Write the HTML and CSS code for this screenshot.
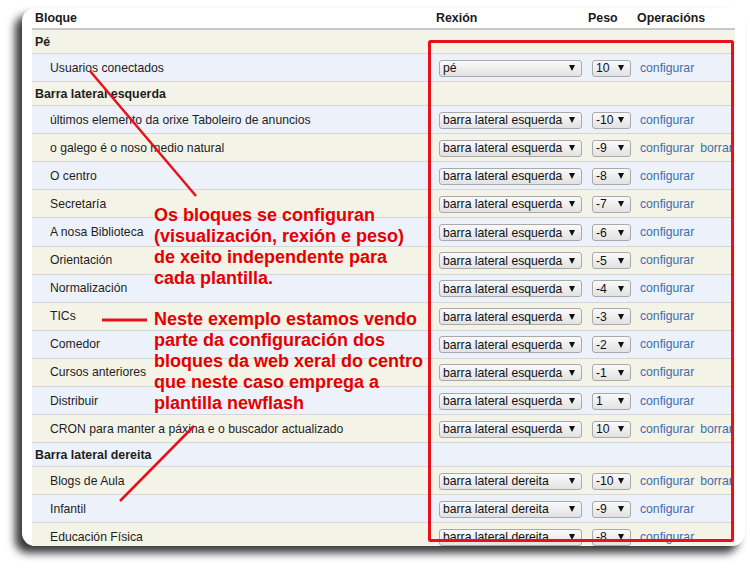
FILE: index.html
```html
<!DOCTYPE html>
<html lang="gl">
<head>
<meta charset="utf-8">
<title>Bloques</title>
<link rel="stylesheet" href="styles.css">
</head>
<body>
<div class="card">
  <div class="tbl">
    <div class="row head">
      <div class="c1">Bloque</div>
      <div class="c2">Rexión</div>
      <div class="c3">Peso</div>
      <div class="c4">Operacións</div>
    </div>
    <div class="rows">
      <div class="row region"><div class="c1">Pé</div></div>
      <div class="row"><div class="c1 name">Usuarios conectados</div><div class="c2"><span class="sel rg">pé</span></div><div class="c3"><span class="sel wt">10</span></div><div class="c4"><a>configurar</a></div></div>
      <div class="row region"><div class="c1">Barra lateral esquerda</div></div>
      <div class="row"><div class="c1 name">últimos elemento da orixe Taboleiro de anuncios</div><div class="c2"><span class="sel rg">barra lateral esquerda</span></div><div class="c3"><span class="sel wt">-10</span></div><div class="c4"><a>configurar</a></div></div>
      <div class="row"><div class="c1 name">o galego é o noso medio natural</div><div class="c2"><span class="sel rg">barra lateral esquerda</span></div><div class="c3"><span class="sel wt">-9</span></div><div class="c4"><a>configurar</a><a class="del">borrar</a></div></div>
      <div class="row"><div class="c1 name">O centro</div><div class="c2"><span class="sel rg">barra lateral esquerda</span></div><div class="c3"><span class="sel wt">-8</span></div><div class="c4"><a>configurar</a></div></div>
      <div class="row"><div class="c1 name">Secretaría</div><div class="c2"><span class="sel rg">barra lateral esquerda</span></div><div class="c3"><span class="sel wt">-7</span></div><div class="c4"><a>configurar</a></div></div>
      <div class="row"><div class="c1 name">A nosa Biblioteca</div><div class="c2"><span class="sel rg">barra lateral esquerda</span></div><div class="c3"><span class="sel wt">-6</span></div><div class="c4"><a>configurar</a></div></div>
      <div class="row"><div class="c1 name">Orientación</div><div class="c2"><span class="sel rg">barra lateral esquerda</span></div><div class="c3"><span class="sel wt">-5</span></div><div class="c4"><a>configurar</a></div></div>
      <div class="row"><div class="c1 name">Normalización</div><div class="c2"><span class="sel rg">barra lateral esquerda</span></div><div class="c3"><span class="sel wt">-4</span></div><div class="c4"><a>configurar</a></div></div>
      <div class="row"><div class="c1 name">TICs</div><div class="c2"><span class="sel rg">barra lateral esquerda</span></div><div class="c3"><span class="sel wt">-3</span></div><div class="c4"><a>configurar</a></div></div>
      <div class="row"><div class="c1 name">Comedor</div><div class="c2"><span class="sel rg">barra lateral esquerda</span></div><div class="c3"><span class="sel wt">-2</span></div><div class="c4"><a>configurar</a></div></div>
      <div class="row"><div class="c1 name">Cursos anteriores</div><div class="c2"><span class="sel rg">barra lateral esquerda</span></div><div class="c3"><span class="sel wt">-1</span></div><div class="c4"><a>configurar</a></div></div>
      <div class="row"><div class="c1 name">Distribuir</div><div class="c2"><span class="sel rg">barra lateral esquerda</span></div><div class="c3"><span class="sel wt">1</span></div><div class="c4"><a>configurar</a></div></div>
      <div class="row"><div class="c1 name">CRON para manter a páxina e o buscador actualizado</div><div class="c2"><span class="sel rg">barra lateral esquerda</span></div><div class="c3"><span class="sel wt">10</span></div><div class="c4"><a>configurar</a><a class="del">borrar</a></div></div>
      <div class="row region"><div class="c1">Barra lateral dereita</div></div>
      <div class="row"><div class="c1 name">Blogs de Aula</div><div class="c2"><span class="sel rg">barra lateral dereita</span></div><div class="c3"><span class="sel wt">-10</span></div><div class="c4"><a>configurar</a><a class="del">borrar</a></div></div>
      <div class="row"><div class="c1 name">Infantil</div><div class="c2"><span class="sel rg">barra lateral dereita</span></div><div class="c3"><span class="sel wt">-9</span></div><div class="c4"><a>configurar</a></div></div>
      <div class="row"><div class="c1 name">Educación Física</div><div class="c2"><span class="sel rg">barra lateral dereita</span></div><div class="c3"><span class="sel wt">-8</span></div><div class="c4"><a>configurar</a></div></div>
    </div>
  </div>
</div>

<svg class="marks" width="750" height="569" viewBox="0 0 750 569" xmlns="http://www.w3.org/2000/svg">
  <rect x="429.5" y="41.5" width="303" height="499" rx="1" fill="none" stroke="#e8111b" stroke-width="3"/>
  <line x1="90" y1="71" x2="196" y2="196" stroke="#e8111b" stroke-width="2.5"/>
  <line x1="102" y1="320" x2="147" y2="320" stroke="#e8111b" stroke-width="3"/>
  <line x1="194" y1="426" x2="120" y2="501" stroke="#e8111b" stroke-width="2.5"/>
</svg>

<div class="note note1">Os bloques se configuran<br>(visualización, rexión e peso)<br>de xeito independente para<br>cada plantilla.</div>
<div class="note note2">Neste exemplo estamos vendo<br>parte da configuración dos<br>bloques da web xeral do centro<br>que neste caso emprega a<br>plantilla newflash</div>
</body>
</html>
```

FILE: styles.css
```css
html, body {
  margin: 0;
  padding: 0;
  background: #ffffff;
}
body {
  width: 750px;
  height: 569px;
  overflow: hidden;
  position: relative;
  font-family: "Liberation Sans", Arial, sans-serif;
  font-size: 12.2px;
  color: #1e1e1e;
}
.card {
  margin: 8px 0 0 22px;
  width: 723px;
  height: 538px;
  box-sizing: border-box;
  padding: 0 10px;
  background: #ffffff;
  border-radius: 13px;
  overflow: hidden;
  box-shadow: -7px 7px 9px rgba(0, 0, 0, 0.78);
}
.tbl {
  width: 703px;
  height: 100%;
  overflow: hidden;
}
.row {
  display: grid;
  grid-template-columns: 401px 152px 49px 170px;
  align-items: center;
  width: 772px;
  height: 28.1px;
  box-sizing: border-box;
  border-bottom: 1px solid #d6d6d6;
  white-space: nowrap;
}
.row > div {
  padding-left: 3px;
}
.head {
  height: 22px;
  background: #ffffff;
  border-bottom: 2px solid #c8c8c8;
  font-weight: bold;
  font-size: 12.4px;
  color: #1a1a1a;
}
.region {
  height: 24px;
  font-weight: bold;
  font-size: 12.4px;
}
.rows > .row:nth-child(odd) {
  background: #f4f3e7;
}
.rows > .row:nth-child(even) {
  background: #edf2fa;
}
.row > .name {
  padding-left: 18px;
}
.sel {
  display: flex;
  align-items: center;
  justify-content: space-between;
  box-sizing: border-box;
  height: 17px;
  margin-top: 1px;
  margin-left: 3px;
  padding: 0 6px 0 3px;
  border: 1px solid #a9a9a9;
  border-radius: 3px;
  background: linear-gradient(#fafafa, #e2e2e2);
  color: #111;
  font-size: 12.2px;
}
.sel::after {
  content: "";
  width: 0;
  height: 0;
  border-left: 3px solid transparent;
  border-right: 3px solid transparent;
  border-top: 6px solid #111;
}
.sel.rg {
  width: 143px;
}
.sel.wt {
  width: 39px;
  margin-left: 4px;
}
.c4 a {
  color: #3d6daf;
  padding-left: 3px;
}
.c4 a.del {
  padding-left: 6px;
}
.marks {
  position: absolute;
  left: 0;
  top: 0;
  pointer-events: none;
}
.note {
  position: absolute;
  left: 154px;
  font-family: "Liberation Sans", Arial, sans-serif;
  font-weight: bold;
  font-size: 18px;
  line-height: 21px;
  color: #e30000;
  white-space: nowrap;
}
.note1 {
  top: 205px;
}
.note2 {
  top: 309px;
}
```
